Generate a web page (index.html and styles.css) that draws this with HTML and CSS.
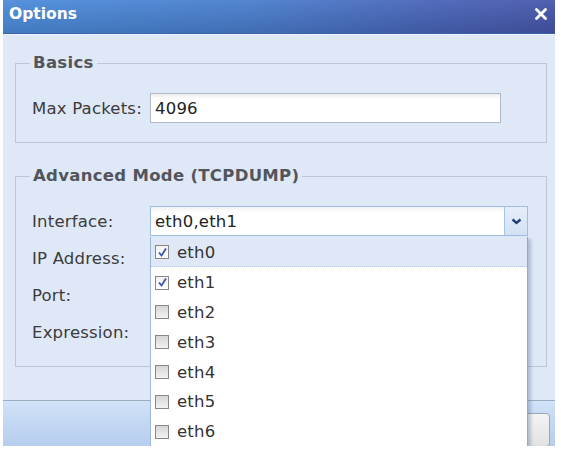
FILE: index.html
```html
<!DOCTYPE html>
<html lang="en">

<head>
    <meta charset="UTF-8">
    <meta name="viewport" content="width=device-width, initial-scale=1.0">
    <title>Options</title>

    <link rel="stylesheet" href="styles.css">
</head>

<body>

    <div class="dialog">

        <div class="titlebar">
            <span class="title">Options</span>
            <svg class="close" width="12" height="12" viewBox="0 0 12 12">
                <path d="M1.5 1.5 L10.5 10.5 M10.5 1.5 L1.5 10.5" stroke="#fff" stroke-width="2.8" stroke-linecap="round" />
            </svg>
        </div>

        <div class="content">

            <fieldset class="group">
                <legend>Basics</legend>
                <div class="row">
                    <label for="packets">Max Packets:</label>
                    <input type="text" id="packets" class="field short" value="4096">
                </div>
            </fieldset>

            <fieldset class="group">
                <legend>Advanced Mode (TCPDUMP)</legend>

                <div class="row">
                    <label for="iface">Interface:</label>
                    <div class="combo">
                        <input type="text" id="iface" value="eth0,eth1">
                        <span class="trigger">
                            <svg width="11" height="7" viewBox="0 0 11 7">
                                <path d="M1.5 1.5 L5.5 5 L9.5 1.5" fill="none" stroke="#1f3f7a" stroke-width="2.4" />
                            </svg>
                        </span>

                        <!-- lista aberta do combo -->
                        <ul class="picklist">
                            <li class="sel"><span class="check on"><svg width="11" height="11" viewBox="0 0 11 11"><path d="M2 5.5 L4.5 8.5 L9 1.5" fill="none" stroke="#3a56b0" stroke-width="1.8" /></svg></span>eth0</li>
                            <li><span class="check on"><svg width="11" height="11" viewBox="0 0 11 11"><path d="M2 5.5 L4.5 8.5 L9 1.5" fill="none" stroke="#3a56b0" stroke-width="1.8" /></svg></span>eth1</li>
                            <li><span class="check"></span>eth2</li>
                            <li><span class="check"></span>eth3</li>
                            <li><span class="check"></span>eth4</li>
                            <li><span class="check"></span>eth5</li>
                            <li><span class="check"></span>eth6</li>
                        </ul>
                    </div>
                </div>

                <div class="row">
                    <label for="ip">IP Address:</label>
                    <input type="text" id="ip" class="field">
                </div>

                <div class="row">
                    <label for="port">Port:</label>
                    <input type="text" id="port" class="field">
                </div>

                <div class="row">
                    <label for="expr">Expression:</label>
                    <input type="text" id="expr" class="field">
                </div>
            </fieldset>

        </div>

        <div class="footer">
            <button class="btn">OK</button>
        </div>

    </div>

</body>

</html>
```

FILE: styles.css
```css
* {
    margin: 0;
    padding: 0;
    box-sizing: border-box;
    outline: none;
}

html,
body {
    overflow: hidden;
}

body {
    background-color: #ffffff;
    font-family: "DejaVu Sans", Verdana, sans-serif;
    font-size: 16.5px;
    letter-spacing: .2px;
    color: #3a3a3a;
}

.dialog {
    width: 552px;
    margin-left: 3px;
    background-color: #dfe8f6;
}

.titlebar {
    height: 34px;
    display: flex;
    justify-content: space-between;
    align-items: flex-start;
    padding: 4px 8px 0 6px;
    background:
        linear-gradient(rgba(255, 255, 255, .06), rgba(0, 0, 0, .12)),
        linear-gradient(to right, #4b8cdb 0%, #497dcd 45%, #4866ba 75%, #4656aa 100%);
    border-bottom: 1px solid #3a62ad;
}

.title {
    color: white;
    font-weight: bold;
    font-size: 15.5px;
    letter-spacing: 0;
    line-height: 20px;
}

.close {
    margin-top: 4px;
}

.content {
    border-top: 1px solid #edf2fa;
    padding: 18px 8px 33px 12px;
}

.group {
    border: 1px solid #bcc7d6;
    padding: 20px 16px 19px 16px;
}

.group+.group {
    margin-top: 23px;
}

legend {
    font-weight: bold;
    color: #52565c;
    line-height: 20px;
    letter-spacing: .3px;
    padding: 0 3px;
    margin-left: -2px;
}

.row {
    display: flex;
    align-items: center;
    height: 30px;
}

.row+.row {
    margin-top: 7px;
}

label {
    width: 118px;
    flex: none;
    color: #3b3b3b;
}

.field {
    height: 30px;
    width: 378px;
    border: 1px solid #b5b8c8;
    padding: 0 4px;
    font: inherit;
    letter-spacing: inherit;
    color: #222;
    background: linear-gradient(#ececec, #ffffff 5px);
}

.short {
    width: 351px;
}

.combo {
    position: relative;
    display: flex;
    width: 378px;
    height: 30px;
    border: 1px solid #9fbde4;
    background: linear-gradient(#f0f0f0, #ffffff 5px);
}

.combo input {
    flex: 1;
    border: none;
    background: transparent;
    font: inherit;
    letter-spacing: inherit;
    color: #222;
    padding: 0 4px;
}

.trigger {
    width: 23px;
    display: flex;
    align-items: center;
    justify-content: center;
    border-left: 1px solid #a9c3e6;
    background: linear-gradient(#e6eef9, #d3e1f4);
}

.picklist {
    position: absolute;
    z-index: 10;
    top: 30px;
    left: -1px;
    width: 378px;
    height: 240px;
    list-style: none;
    background-color: white;
    border: 1px solid #9fb7d8;
    border-top: none;
    border-right-color: #8fa9cf;
    box-shadow: 3px 2px 3px rgba(90, 110, 150, .35);
}

.picklist li {
    height: 29.8px;
    display: flex;
    align-items: center;
    gap: 8px;
    padding-left: 4px;
    padding-top: 2px;
    color: #333;
}

.picklist .sel {
    background-color: #dfe8f6;
    border-bottom: 1px dotted #b3c6e6;
}

.check {
    width: 14px;
    height: 14px;
    flex: none;
    border: 1px solid #888888;
    background: linear-gradient(#d6d6d6, #f2f2f2);
    display: flex;
    align-items: center;
    justify-content: center;
}

.check.on {
    background: linear-gradient(#f2f2f2, #ffffff);
}

.footer {
    height: 46px;
    border-top: 1px solid #9eabbd;
    background: linear-gradient(#d0e2f7, #b6cdee);
    display: flex;
    justify-content: flex-end;
    padding: 12px 5px 0 0;
}

.btn {
    width: 80px;
    height: 34px;
    border: 1px solid #9aa7b8;
    border-radius: 4px;
    background: linear-gradient(#f4f4f4, #e2e2e2);
    font: inherit;
    color: #333;
}
```
